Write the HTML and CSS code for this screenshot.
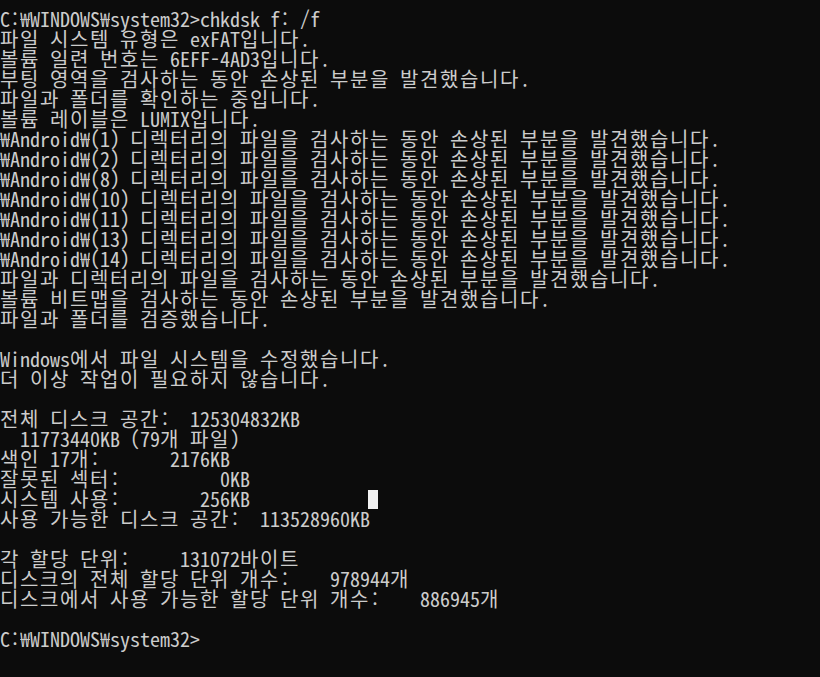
FILE: index.html
```html
<!DOCTYPE html>
<html lang="ko">
<head>
<meta charset="utf-8">
<title>명령 프롬프트</title>
<link rel="stylesheet" href="styles.css">
</head>
<body>
<div class="console">
<div class="line">C:<span class="won">₩</span>WINDOWS<span class="won">₩</span>system32&gt;chkdsk f: /f</div>
<div class="line"><span class="k">파일</span> <span class="k">시스템</span> <span class="k">유형은</span> exFAT<span class="k">입니다</span>.</div>
<div class="line"><span class="k">볼륨</span> <span class="k">일련</span> <span class="k">번호는</span> 6EFF-4AD3<span class="k">입니다</span>.</div>
<div class="line"><span class="k">부팅</span> <span class="k">영역을</span> <span class="k">검사하는</span> <span class="k">동안</span> <span class="k">손상된</span> <span class="k">부분을</span> <span class="k">발견했습니다</span>.</div>
<div class="line"><span class="k">파일과</span> <span class="k">폴더를</span> <span class="k">확인하는</span> <span class="k">중입니다</span>.</div>
<div class="line"><span class="k">볼륨</span> <span class="k">레이블은</span> LUMIX<span class="k">입니다</span>.</div>
<div class="line"><span class="won">₩</span>Android<span class="won">₩</span>(1) <span class="k">디렉터리의</span> <span class="k">파일을</span> <span class="k">검사하는</span> <span class="k">동안</span> <span class="k">손상된</span> <span class="k">부분을</span> <span class="k">발견했습니다</span>.</div>
<div class="line"><span class="won">₩</span>Android<span class="won">₩</span>(2) <span class="k">디렉터리의</span> <span class="k">파일을</span> <span class="k">검사하는</span> <span class="k">동안</span> <span class="k">손상된</span> <span class="k">부분을</span> <span class="k">발견했습니다</span>.</div>
<div class="line"><span class="won">₩</span>Android<span class="won">₩</span>(8) <span class="k">디렉터리의</span> <span class="k">파일을</span> <span class="k">검사하는</span> <span class="k">동안</span> <span class="k">손상된</span> <span class="k">부분을</span> <span class="k">발견했습니다</span>.</div>
<div class="line"><span class="won">₩</span>Android<span class="won">₩</span>(10) <span class="k">디렉터리의</span> <span class="k">파일을</span> <span class="k">검사하는</span> <span class="k">동안</span> <span class="k">손상된</span> <span class="k">부분을</span> <span class="k">발견했습니다</span>.</div>
<div class="line"><span class="won">₩</span>Android<span class="won">₩</span>(11) <span class="k">디렉터리의</span> <span class="k">파일을</span> <span class="k">검사하는</span> <span class="k">동안</span> <span class="k">손상된</span> <span class="k">부분을</span> <span class="k">발견했습니다</span>.</div>
<div class="line"><span class="won">₩</span>Android<span class="won">₩</span>(13) <span class="k">디렉터리의</span> <span class="k">파일을</span> <span class="k">검사하는</span> <span class="k">동안</span> <span class="k">손상된</span> <span class="k">부분을</span> <span class="k">발견했습니다</span>.</div>
<div class="line"><span class="won">₩</span>Android<span class="won">₩</span>(14) <span class="k">디렉터리의</span> <span class="k">파일을</span> <span class="k">검사하는</span> <span class="k">동안</span> <span class="k">손상된</span> <span class="k">부분을</span> <span class="k">발견했습니다</span>.</div>
<div class="line"><span class="k">파일과</span> <span class="k">디렉터리의</span> <span class="k">파일을</span> <span class="k">검사하는</span> <span class="k">동안</span> <span class="k">손상된</span> <span class="k">부분을</span> <span class="k">발견했습니다</span>.</div>
<div class="line"><span class="k">볼륨</span> <span class="k">비트맵을</span> <span class="k">검사하는</span> <span class="k">동안</span> <span class="k">손상된</span> <span class="k">부분을</span> <span class="k">발견했습니다</span>.</div>
<div class="line"><span class="k">파일과</span> <span class="k">폴더를</span> <span class="k">검증했습니다</span>.</div>
<div class="line"> </div>
<div class="line">Windows<span class="k">에서</span> <span class="k">파일</span> <span class="k">시스템을</span> <span class="k">수정했습니다</span>.</div>
<div class="line"><span class="k">더</span> <span class="k">이상</span> <span class="k">작업이</span> <span class="k">필요하지</span> <span class="k">않습니다</span>.</div>
<div class="line"> </div>
<div class="line"><span class="k">전체</span> <span class="k">디스크</span> <span class="k">공간</span>:  125304832KB</div>
<div class="line">  11773440KB (79<span class="k">개</span> <span class="k">파일</span>)</div>
<div class="line"><span class="k">색인</span> 17<span class="k">개</span>:       2176KB</div>
<div class="line"><span class="k">잘못된</span> <span class="k">섹터</span>:          0KB</div>
<div class="line"><span class="k">시스템</span> <span class="k">사용</span>:        256KB<span class="cursor"></span></div>
<div class="line"><span class="k">사용</span> <span class="k">가능한</span> <span class="k">디스크</span> <span class="k">공간</span>:  113528960KB</div>
<div class="line"> </div>
<div class="line"><span class="k">각</span> <span class="k">할당</span> <span class="k">단위</span>:     131072<span class="k">바이트</span></div>
<div class="line"><span class="k">디스크의</span> <span class="k">전체</span> <span class="k">할당</span> <span class="k">단위</span> <span class="k">개수</span>:    978944<span class="k">개</span></div>
<div class="line"><span class="k">디스크에서</span> <span class="k">사용</span> <span class="k">가능한</span> <span class="k">할당</span> <span class="k">단위</span> <span class="k">개수</span>:    886945<span class="k">개</span></div>
<div class="line"> </div>
<div class="line">C:<span class="won">₩</span>WINDOWS<span class="won">₩</span>system32&gt;</div>
</div>
</body>
</html>
```
FILE: styles.css
```css
html, body {
  margin: 0;
  padding: 0;
  background: #0c0c0c;
  height: 100%;
  overflow: hidden;
}
.console {
  position: relative;
  padding-top: 9px;
  color: #cccccc;
  font-family: "Noto Sans Mono CJK KR", "Noto Sans CJK KR", "DejaVu Sans Mono", monospace;
  font-size: 20px;
  line-height: 20px;
}
.line {
  white-space: pre;
  height: 20px;
}
.k {
  letter-spacing: 1.6px;
}
.won {
  display: inline-block;
  width: 10px;
  text-align: center;
  overflow: hidden;
  vertical-align: top;
}
.cursor {
  position: absolute;
  left: 368px;
  top: 490px;
  width: 10px;
  height: 19px;
  background: #f2f2f2;
}
```
